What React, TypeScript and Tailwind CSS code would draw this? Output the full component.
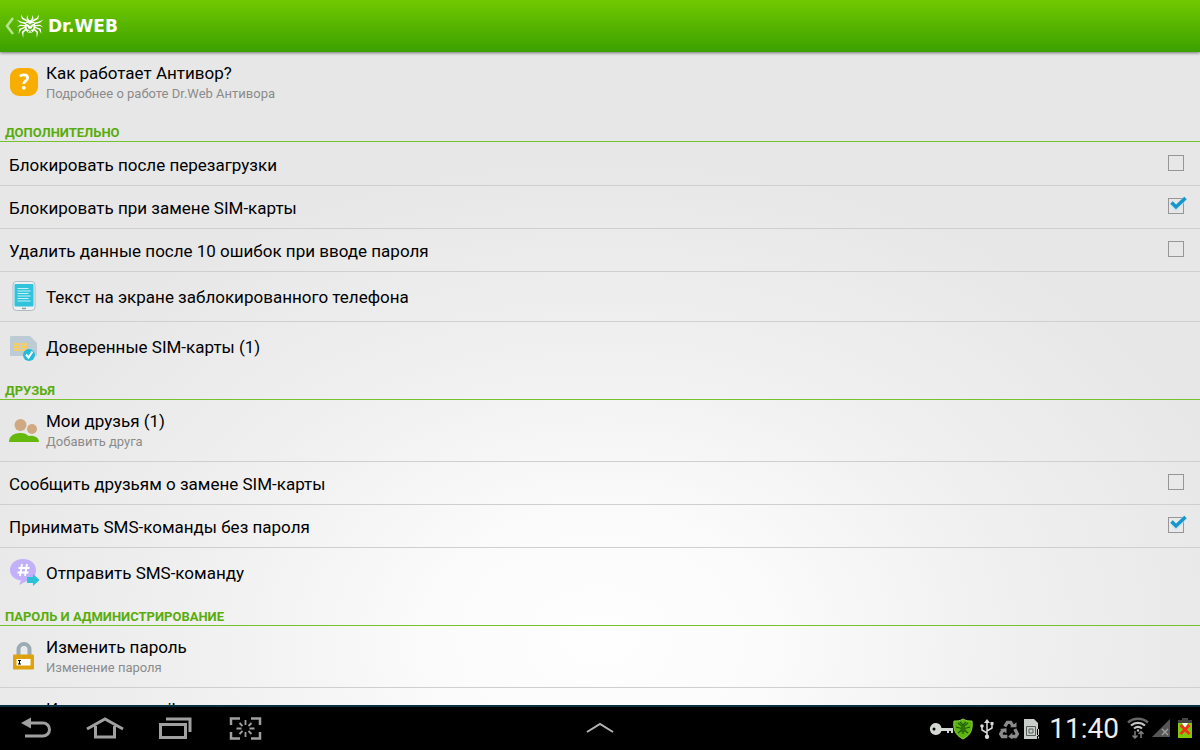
import { useState } from 'react'
import type { ReactNode } from 'react'

type RowProps = {
  icon: ReactNode
  title: string
  subtitle?: string
}

function QuestionIcon() {
  return (
    <svg width="30" height="32" viewBox="0 0 30 32" aria-hidden="true">
      <rect x="1" y="1" width="28" height="28" rx="9" fill="#f8ae00" />
      <path
        d="M10.8 9.200c1.300-.9 2.600-1.300 4-1.300 2.400 0 3.800 1.200 3.800 3 0 3.100-3.800 3-3.800 6"
        fill="none"
        stroke="#fff"
        strokeWidth="2.800"
      />
      <circle cx="14.8" cy="20.8" r="1.900" fill="#fff" />
    </svg>
  )
}

function PhoneTextIcon() {
  return (
    <svg width="30" height="32" viewBox="0 0 30 32" aria-hidden="true">
      <rect x="4" y=".5" width="22" height="29" rx="3.500" fill="#edf1f4" stroke="#b2bcc4" />
      <rect x="5.500" y="3" width="19" height="22.500" rx="1" fill="#2fc4dc" />
      <path d="M8.500 7.500h11M8.500 10h13M8.500 12.500h11M8.500 15h13M8.500 17.500h11M8.500 20h13" stroke="#d8f6fa" strokeWidth=".9" />
      <path d="M13 27.500h4" stroke="#929ca4" strokeWidth="1.500" />
    </svg>
  )
}

function SimIcon() {
  return (
    <svg width="30" height="30" viewBox="0 0 30 30" aria-hidden="true">
      <path d="M1 5a1 1 0 0 1 1-1h19l7 7v12a1 1 0 0 1-1 1H2a1 1 0 0 1-1-1z" fill="#bccbd4" />
      <rect x="5" y="11" width="13" height="8" rx="1" fill="#fccd58" />
      <path d="M5 13.500h13M5 16.500h13M11.500 11v8" stroke="#c6cdc7" strokeWidth=".8" />
      <circle cx="20" cy="23" r="6" fill="#25bbd8" />
      <path d="M17 22.500l2.500 3 4-6" fill="none" stroke="#fff" strokeWidth="2" />
    </svg>
  )
}

function FriendsIcon() {
  return (
    <svg width="32" height="30" viewBox="0 0 32 30" aria-hidden="true">
      <circle cx="12.500" cy="9" r="6" fill="#d0a983" />
      <circle cx="24" cy="13" r="5" fill="#d0a983" />
      <path d="M1 26c0-6 5-9 11.500-9 4 0 6 1 8 3 5-1 10.500 1 10.500 6z" fill="#64b90c" />
    </svg>
  )
}

function SmsIcon() {
  return (
    <svg width="32" height="30" viewBox="0 0 32 30" aria-hidden="true">
      <path d="M15 1c7.500 0 13 4.500 13 11s-4 10-9 11l-8 4 2-4.500C6.500 21.500 2 17.500 2 12 2 5.500 7.500 1 15 1z" fill="#c3b0fb" />
      <path d="M14 6l-2 12M19 6l-2 12M10.500 10h11M9.500 14.500h11" fill="none" stroke="#fff" strokeWidth="1.900" />
      <path d="M19 19h6v-3l6.500 6-6.500 6v-3h-6z" fill="#29c2d8" />
    </svg>
  )
}

function LockIcon() {
  return (
    <svg width="30" height="32" viewBox="0 0 30 32" aria-hidden="true">
      <path d="M9.500 15V8.500a5.500 5.500 0 0 1 11 0V15" fill="none" stroke="#9dabb5" strokeWidth="4" />
      <rect x="4" y="13.500" width="21" height="15" rx="1" fill="#dda20d" />
      <rect x="7.500" y="18" width="14" height="6.500" fill="#fff" />
      <path d="M9 19.500h3M9 23h3M10.500 19.500V23" stroke="#000" />
    </svg>
  )
}

function MailIcon() {
  return (
    <svg width="30" height="30" viewBox="0 0 30 30" aria-hidden="true">
      <rect x="3" y="7" width="24" height="17" rx="1" fill="#dda20d" />
      <path d="M4 8l11 9 11-9" fill="none" stroke="#fff" strokeWidth="2" />
    </svg>
  )
}

function SpiderLogo() {
  return (
    <svg width="28" height="26" viewBox="0 0 28 26" aria-hidden="true">
      <g fill="#fff">
        <ellipse cx="14" cy="13.500" rx="5.400" ry="6.300" />
        <path d="M10.800 8.500L5.800 6 5 1.500 7.300 5 12 7.200zM17.200 8.500l5-2.500.8-4.500L20.700 5 16 7.200z" />
        <path d="M9.500 11.200L4 9.800.5 6.500 4.800 8.500 10 9.500zM18.500 11.200L24 9.800l3.500-3.300-4.300 2L18 9.500z" />
        <path d="M9 13.300l-5-.3-3.500 1.500L4 11.700l5 .3zM19 13.300l5-.3 3.500 1.500L24 11.700l-5 .3z" />
        <path d="M9.200 15l-4 1.500L2.500 21l.8-5.200L9 13.700zM18.800 15l4 1.500 2.700 4.500-.8-5.200-5.700-2.100z" />
        <path d="M10 17.300l-2.500 2.200L7.200 25 5.800 19l3.500-3.200zM18 17.300l2.500 2.200.3 5.500 1.400-6-3.500-3.200z" />
        <path d="M12 8l-1.500-2.700L11.700 2l.3 3 1.300 2.500h1.400L16 5l.3-3 1.200 3.300L16 8z" />
      </g>
      <g fill="none" stroke="#4eb000">
        <path d="M10.300 10.500c1.500-.2 2.700.5 3.700 2 1-1.500 2.200-2.200 3.700-2M11 13.500c0 2 1 3 3 3s3-1 3-3" strokeWidth="1.100" />
        <path d="M12 18.500l2-.8 2 .8" />
      </g>
    </svg>
  )
}

function LinkRow({ icon, title, subtitle }: RowProps) {
  return (
    <button
      type="button"
      className={
        subtitle
          ? 'flex h-[61px] w-full items-center gap-1.5 px-2 text-left'
          : 'flex h-[50px] w-full items-center gap-1.5 px-2 text-left'
      }
    >
      <span className="flex w-8 justify-center">{icon}</span>
      <span className={subtitle ? 'flex flex-col pt-0.5' : 'flex flex-col'}>
        <span className="text-[17px] leading-5 text-black">{title}</span>
        {subtitle && <span className="text-[13px] leading-[22px] text-[#8b8b8b]">{subtitle}</span>}
      </span>
    </button>
  )
}

function CheckRow({ title, defaultChecked = false }: { title: string; defaultChecked?: boolean }) {
  const [checked, setChecked] = useState(defaultChecked)

  return (
    <label className="flex h-[43px] items-center justify-between pt-1 pr-4 pl-[9px] text-[17px] text-black">
      {title}
      <span className="relative mb-1.5 size-4">
        <input
          type="checkbox"
          checked={checked}
          onChange={event => setChecked(event.target.checked)}
          className="block size-4 appearance-none border border-[#969696]"
        />
        {checked && (
          <svg className="pointer-events-none absolute -top-1 left-0.5" width="18" height="18" viewBox="0 0 18 18" aria-hidden="true">
            <path d="M1.500 8.500l4.500 5.500L15.500 4" fill="none" stroke="#b5dff0" strokeWidth="5" opacity=".6" />
            <path d="M1.500 8.500l4.500 4.500L15.500 4" fill="none" stroke="#1596cc" strokeWidth="3.400" />
          </svg>
        )}
      </span>
    </label>
  )
}

function Section({ title, children }: { title: string; children: ReactNode }) {
  return (
    <section>
      <h2 className="flex h-7 items-end border-b border-[#74c22c] pl-[5px] text-[13px] leading-[17px] font-bold text-[#58ac0c] uppercase">
        {title}
      </h2>
      <div className="divide-y divide-[#cfcfcf] pt-px">{children}</div>
    </section>
  )
}

function NavBar() {
  return (
    <footer className="grid h-[45px] shrink-0 grid-cols-[1fr_auto_1fr] items-center border-t-2 border-[#08303e] bg-black">
      <nav className="flex items-center gap-[34px] pl-5 text-[#a0a0a0]">
        <button type="button" aria-label="Назад">
          <svg width="32" height="24" viewBox="0 0 32 24" fill="none" stroke="currentColor" strokeWidth="3">
            <path d="M10 6h13a6.500 6.500 0 0 1 0 13H5" />
            <path d="M1 6l10-5.500v11z" fill="currentColor" stroke="none" />
          </svg>
        </button>
        <button type="button" aria-label="Домой">
          <svg width="38" height="24" viewBox="0 0 38 24" fill="none" stroke="currentColor" strokeWidth="3">
            <path d="M1 12L19 2l18 10M9.500 9v11h19V9" />
          </svg>
        </button>
        <button type="button" aria-label="Недавние приложения">
          <svg width="34" height="24" viewBox="0 0 34 24" fill="none" stroke="currentColor" strokeWidth="3">
            <path d="M2.500 7.500h25v13h-25z" />
            <path d="M8 2h24v13" />
          </svg>
        </button>
        <button type="button" className="pl-0.5" aria-label="Снимок экрана">
          <svg width="36" height="24" viewBox="0 0 36 24" fill="none" stroke="currentColor" strokeWidth="2.500">
            <path d="M3 8V1.500h9M23 1.500h9V8M32 15v6.500h-9M12 21.500H3V15" />
            <path d="M17.500 3v5M17.500 15v5M8.500 11.500h5M21.500 11.500h5M11.500 6l3 3M23.500 6l-3 3M11.500 17l3-3M23.500 17l-3-3" strokeWidth="1.800" />
          </svg>
        </button>
      </nav>
      <button type="button" aria-label="Открыть панель">
        <svg width="30" height="16" viewBox="0 0 30 16" fill="none" stroke="#b4b4b4" strokeWidth="2">
          <path d="M2 11l13-8 13 8" />
        </svg>
      </button>
      <div className="flex items-center justify-end pr-[7px]">
        <svg width="24" height="22" viewBox="0 0 24 22" aria-hidden="true">
          <path d="M7 5a6 6 0 1 0 5.500 8H18v2h2v-2h2v2h2v-5H12.500A6 6 0 0 0 7 5zM5 9.500a1.500 1.500 0 1 1 0 3 1.500 1.500 0 0 1 0-3z" fill="#d3d8d3" fillRule="evenodd" />
        </svg>
        <svg width="20" height="22" viewBox="0 0 20 22" aria-hidden="true">
          <path d="M10 1c3 2 6 2 9 2 1 8-1 14-9 18C2 17 0 11 1 3c3 0 6 0 9-2z" fill="#5cb312" stroke="#8bd33c" />
          <path d="M10 6v10M5 5l5 4 5-4M3 9l7 2 7-2M5 15l5-4 5 4M7 4l3 3 3-3" fill="none" stroke="#1e5a05" strokeWidth="1.200" />
          <ellipse cx="10" cy="11" rx="2.500" ry="3.500" fill="#2c7209" />
        </svg>
        <svg className="ml-1.5" width="16" height="22" viewBox="0 0 16 22" fill="none" stroke="#dadada" strokeWidth="1.500" aria-hidden="true">
          <path d="M8 3v16M8 15l-5-3V8M8 13l5-3V6" />
          <path d="M8 1l3 4H5zM11.500 4h3v3h-3zM8 16.500a2.200 2.200 0 1 1 0 4.400 2.200 2.200 0 0 1 0-4.400z" fill="#dadada" stroke="none" />
          <circle cx="3" cy="8" r="1.800" fill="#dadada" stroke="none" />
        </svg>
        <svg className="ml-1" width="20" height="20" viewBox="0 0 24 24" fill="none" stroke="#8b8b8b" strokeWidth="4" aria-hidden="true">
          <path d="M7 9l3-5h4l3 5M19 12l3 6-2 3h-5M10 21H4l-2-3 3-5" />
          <path d="M13 10h8V4zM16 16.500v8L11 21zM1 12l8-1v6z" fill="#8b8b8b" stroke="none" />
        </svg>
        <svg className="ml-1" width="18" height="22" viewBox="0 0 18 22" aria-hidden="true">
          <path d="M1 1h10l4 4v16H1z" fill="#c8cec9" />
          <path d="M3.500 8.500h9v9h-9zM6 11h4v4H6z" fill="none" stroke="#575c58" />
          <path d="M15.500 11v6M15.500 18v3" stroke="#000" strokeWidth="3" />
          <path d="M15.500 11v6M15.500 18.500v2" stroke="#d0d0d0" />
        </svg>
        <time className="ml-2 text-[28px] leading-8 text-[#eeeeee]">11:40</time>
        <svg className="ml-2" width="22" height="24" viewBox="0 0 22 24" fill="none" aria-hidden="true">
          <path d="M1 5.500c6-5 14-5 20 0" stroke="#666" strokeWidth="2.500" />
          <path d="M4 8.500c4-3.500 10-3.500 14 0M7 11.500c2.500-2 5.500-2 8 0M11 12.500v2" stroke="#c8c8c8" strokeWidth="2.200" />
          <path d="M8 14v7M5.500 18.500L8 21l2.500-2.500M14 21v-6M11.500 17l2.500-2.500 2.500 2.500" stroke="#808080" strokeWidth="1.500" />
        </svg>
        <svg className="ml-0.5" width="20" height="22" viewBox="0 0 20 22" aria-hidden="true">
          <path d="M19 1v18H1z" fill="#555" />
          <path d="M11 11l6 6M17 11l-6 6" stroke="#a0a0a0" strokeWidth="1.400" />
        </svg>
        <svg className="ml-1.5" width="16" height="22" viewBox="0 0 16 22" aria-hidden="true">
          <path d="M5 0h6v3H5z" fill="#444" />
          <path d="M1 2h14v18H1z" fill="#80c90a" />
          <path d="M1 2h14v3H1z" fill="#444" />
          <path d="M5 5h6l-3 5z" fill="#fff" />
          <path d="M3.500 7l9 9M12.500 7l-9 9" stroke="#ef321d" strokeWidth="2.800" />
        </svg>
      </div>
    </footer>
  )
}

export default function App() {
  return (
    <div className="flex h-screen flex-col overflow-hidden font-['Roboto',sans-serif]">
      <header className="z-10 flex h-[52px] shrink-0 items-center bg-linear-to-b from-[#70c900] to-[#3ba000] pl-1 shadow-[0_1px_3px_rgba(0,0,0,0.5)]">
        <button type="button" className="flex items-center" aria-label="Назад">
          <svg width="12" height="20" viewBox="0 0 12 20" fill="none" stroke="#b5e48d" strokeWidth="2.500" aria-hidden="true">
            <path d="M9 2L3 10l6 8" />
          </svg>
          <SpiderLogo />
        </button>
        <h1 className="ml-1 font-['DejaVu_Sans',sans-serif] text-[17px] leading-6 font-bold text-white">Dr.WEB</h1>
      </header>

      <main className="min-h-0 flex-1 overflow-hidden bg-[#e7e7e7] bg-[radial-gradient(ellipse_56%_74%_at_50%_90%,#fefefe_0%,#fbfbfb_25%,#f0f0f0_60%,#e7e7e7_100%)]">
        <div className="pb-px">
          <LinkRow icon={<QuestionIcon />} title="Как работает Антивор?" subtitle="Подробнее о работе Dr.Web Антивора" />
        </div>

        <Section title="Дополнительно">
          <CheckRow title="Блокировать после перезагрузки" />
          <CheckRow title="Блокировать при замене SIM-карты" defaultChecked />
          <CheckRow title="Удалить данные после 10 ошибок при вводе пароля" />
          <LinkRow icon={<PhoneTextIcon />} title="Текст на экране заблокированного телефона" />
          <LinkRow icon={<SimIcon />} title="Доверенные SIM-карты (1)" />
        </Section>

        <Section title="Друзья">
          <LinkRow icon={<FriendsIcon />} title="Мои друзья (1)" subtitle="Добавить друга" />
          <CheckRow title="Сообщить друзьям о замене SIM-карты" />
          <CheckRow title="Принимать SMS-команды без пароля" defaultChecked />
          <LinkRow icon={<SmsIcon />} title="Отправить SMS-команду" />
        </Section>

        <Section title="Пароль и администрирование">
          <LinkRow icon={<LockIcon />} title="Изменить пароль" subtitle="Изменение пароля" />
          <LinkRow icon={<MailIcon />} title="Изменить e-mail" subtitle="Изменение адреса" />
        </Section>
      </main>

      <NavBar />
    </div>
  )
}
